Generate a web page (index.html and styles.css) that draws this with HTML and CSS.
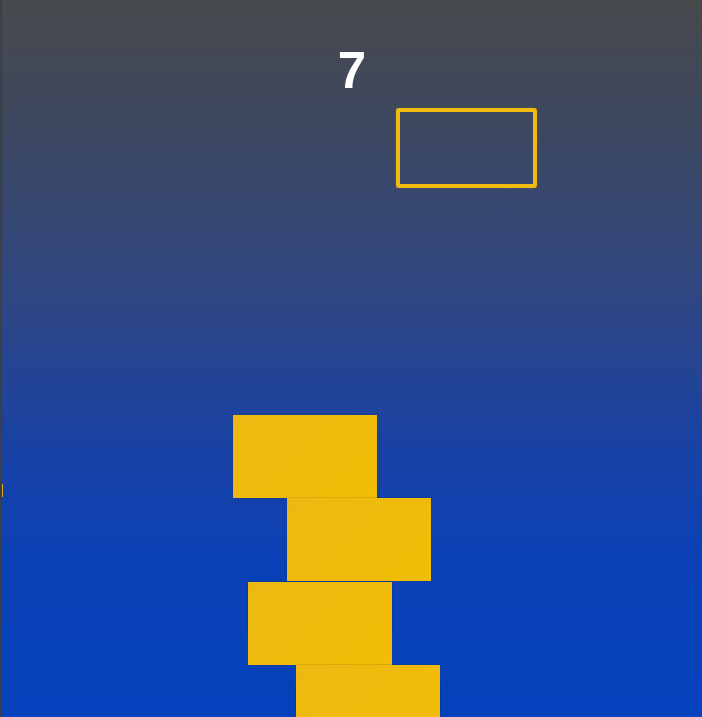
FILE: index.html
```html
<!DOCTYPE html>
<html>
<head>
<meta charset="utf-8">
<link rel="stylesheet" href="styles.css">
</head>
<body>
<div class="game">
  <div class="score">7</div>
  <div class="target"></div>
  <div class="edge-bit"></div>
  <div class="block b1"></div>
  <div class="block b2"></div>
  <div class="block b3"></div>
  <div class="block b4"></div>
</div>
</body>
</html>
```
FILE: styles.css
```css
html, body {
  margin: 0;
  padding: 0;
  width: 702px;
  height: 717px;
  overflow: hidden;
}
.game {
  position: relative;
  width: 702px;
  height: 717px;
  box-sizing: border-box;
  border-left: 2px solid #3b3f46;
  background: linear-gradient(to bottom, #47494c 0%, #3d4860 18%, #2e4683 42%, #1a42a4 62%, #0b41b6 78%, #0441bc 100%);
  overflow: hidden;
}
.score {
  padding-top: 43px;
  text-align: center;
  font-family: "Liberation Sans", Arial, sans-serif;
  font-weight: bold;
  font-size: 51px;
  line-height: 56px;
  color: #ffffff;
}
.target {
  position: absolute;
  left: 394px;
  top: 108px;
  width: 133px;
  height: 72px;
  border: 4px solid #f0ba12;
  border-radius: 3px;
  box-shadow: 0 0 1px rgba(240, 186, 18, 0.6);
}
.edge-bit {
  position: absolute;
  left: -2px;
  top: 484px;
  width: 3px;
  height: 13px;
  background: #d6aa1a;
}
.block {
  position: absolute;
  width: 144px;
  height: 83px;
  background: linear-gradient(135deg, #edb911 0%, #f0bb0a 60%, #f1bd05 100%);
  box-shadow: 0 0 1px rgba(30, 30, 30, 0.7);
}
.b1 { left: 231px; top: 415px; }
.b2 { left: 285px; top: 498px; }
.b3 { left: 246px; top: 582px; }
.b4 { left: 294px; top: 665px; }
```
